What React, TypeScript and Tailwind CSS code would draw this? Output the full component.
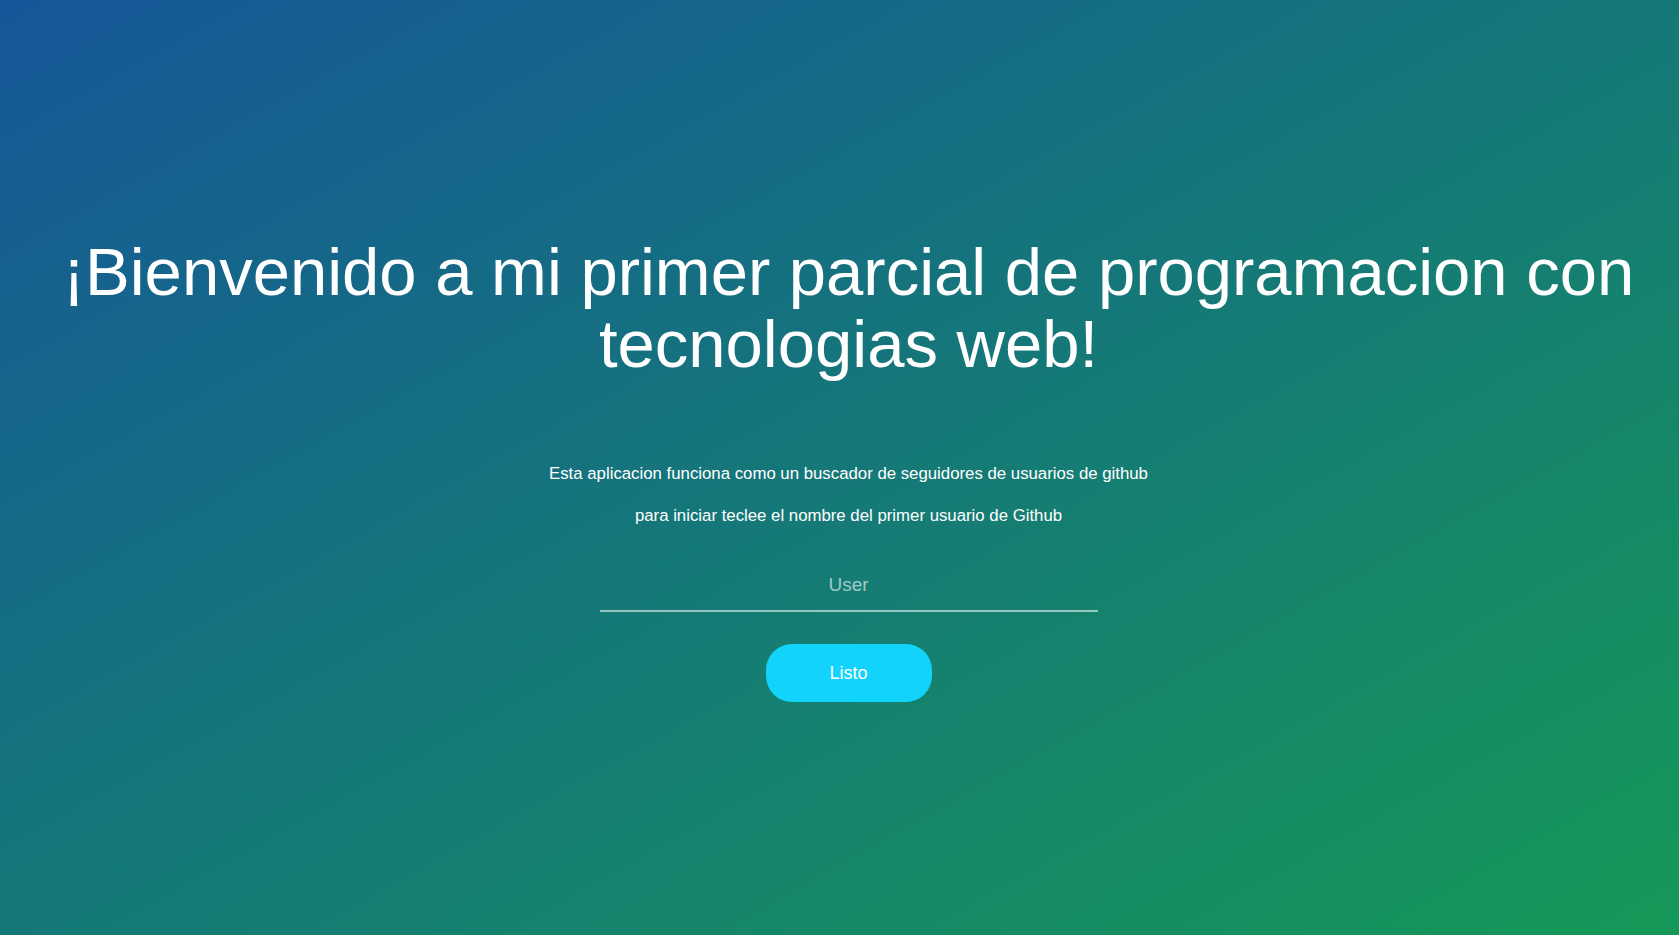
import { useState } from 'react';

export default function App() {
  const [user, setUser] = useState('');

  return (
    <div className="min-h-screen w-full bg-[linear-gradient(to_bottom_right,#155799,#159957)] font-['Liberation_Sans',Arial,sans-serif] text-white">
      <div className="flex min-h-screen flex-col items-center justify-center pl-[18px] pt-[2px]">
        <h1 className="text-center text-[67px] font-normal leading-[72px]">
          ¡Bienvenido a mi primer parcial de programacion con tecnologias web!
        </h1>

        <p className="mt-[85px] text-center text-[16.8px] leading-[18px]">
          Esta aplicacion funciona como un buscador de seguidores de usuarios de github
        </p>
        <p className="mt-[24px] text-center text-[16.8px] leading-[18px]">
          para iniciar teclee el nombre del primer usuario de Github
        </p>

        <input
          type="text"
          value={user}
          onChange={(e) => setUser(e.target.value)}
          placeholder="User"
          className="mt-[35px] h-[52px] w-[498px] border-b-2 border-white/55 bg-transparent text-center text-[19px] text-white outline-none placeholder:text-white/60"
        />

        <button
          type="button"
          className="mt-[32px] h-[58px] w-[166px] rounded-[26px] bg-[#12d3fb] pt-[2px] text-[18px] text-white"
        >
          Listo
        </button>
      </div>
    </div>
  );
}
